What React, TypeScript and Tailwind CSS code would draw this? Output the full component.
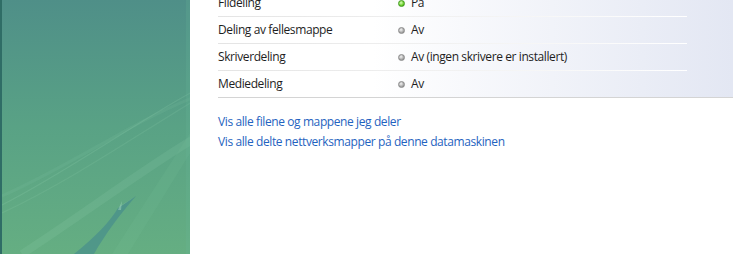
import React from 'react'

const rows = [
  { label: 'Fildeling', value: 'På', on: true },
  { label: 'Deling av fellesmappe', value: 'Av', on: false },
  { label: 'Skriverdeling', value: 'Av (ingen skrivere er installert)', on: false },
  { label: 'Mediedeling', value: 'Av', on: false },
]

function Bullet({ on }: { on: boolean }) {
  return on ? (
    <span className="h-[7px] w-[7px] rounded-full border border-[#3f9a1c] bg-[radial-gradient(circle_at_40%_35%,#d9ffb8,#6ccf2d_60%,#2f8a10)]" />
  ) : (
    <span className="h-[7px] w-[7px] rounded-full border border-[#8a8a8a] bg-[radial-gradient(circle_at_40%_35%,#f4f4f4,#a8a8a8_60%,#7a7a7a)]" />
  )
}

function Sidebar() {
  return (
    <div className="relative h-[254px] w-[190px] shrink-0 overflow-hidden border-l-2 border-[#2f6d66] bg-gradient-to-b from-[#4f8f88] via-[#59a285] to-[#65ae82]">
      {/* vista swoosh */}
      <svg className="absolute inset-0" width="190" height="254" viewBox="0 0 190 254">
        <path d="M0 205 C60 175 130 125 190 92" stroke="#9ad6b6" strokeOpacity="0.18" strokeWidth="1.2" fill="none" />
        <path d="M0 213 C70 180 135 135 190 102" stroke="#9ad6b6" strokeOpacity="0.15" strokeWidth="1.2" fill="none" />
        <path d="M0 196 C70 165 130 122 190 98" stroke="#8fcfae" strokeOpacity="0.12" strokeWidth="3" fill="none" />
        <path d="M20 254 C80 215 140 170 190 140" stroke="#a3dcbc" strokeOpacity="0.12" strokeWidth="8" fill="none" />
        <path d="M72 254 C92 238 108 222 116 208 L134 196 C118 214 102 236 92 254 Z" fill="#3b8290" fillOpacity="0.5" />
        <path d="M116 208 L134 196 L120 205 Z" fill="#b6e4cc" fillOpacity="0.45" />
        <path d="M116 210 L120 201 L119 210 Z" fill="#b6e4cc" fillOpacity="0.4" />
        <path d="M110 254 L190 130 L190 150 L126 254 Z" fill="#7cc49a" fillOpacity="0.15" />
      </svg>
      <div className="absolute right-0 top-0 h-full w-[4px] bg-[#6ab79a] opacity-20" />
    </div>
  )
}

export default function App() {
  return (
    <div
      className="flex h-[254px] w-[733px] overflow-hidden bg-white text-[12px] tracking-[-0.4px] text-[#1e1e1e]"
      style={{ fontFamily: '"Open Sans", "Noto Sans", sans-serif' }}
    >
      <Sidebar />
      <div className="flex min-w-0 flex-1 flex-col pl-[28px]">
        <div className="-mt-[10px] border-b border-[#d4d4d4] bg-gradient-to-r from-white from-30% to-[#e3e7f3] pr-[46px]">
          {rows.map((r, i) => (
            <div key={r.label}>
              <div className="flex h-[26px] items-center">
                <span className="w-[180px] shrink-0">{r.label}</span>
                <span className="flex items-center gap-[6px]">
                  <Bullet on={r.on} />
                  <span>{r.value}</span>
                </span>
              </div>
              {i < rows.length - 1 && (
                <div className="h-px bg-gradient-to-r from-[#e4e4e4] to-white" />
              )}
            </div>
          ))}
        </div>
        <div className="mt-[14px] flex flex-col gap-[1px] text-[#1f63c0]">
          <a className="h-[19px] w-fit cursor-pointer leading-[19px] hover:underline">Vis alle filene og mappene jeg deler</a>
          <a className="h-[19px] w-fit cursor-pointer leading-[19px] hover:underline">
            Vis alle delte nettverksmapper på denne datamaskinen
          </a>
        </div>
      </div>
    </div>
  )
}
